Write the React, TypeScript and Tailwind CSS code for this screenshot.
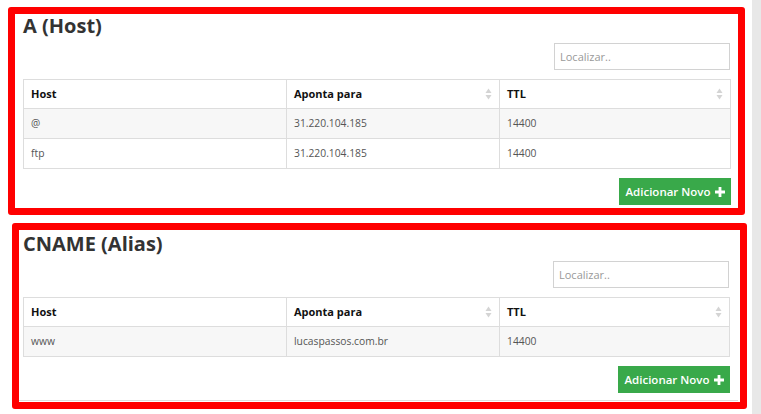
import React from 'react';

interface DnsRow {
  host: string;
  target: string;
  ttl: string;
}

const aRecords: DnsRow[] = [
  { host: '@', target: '31.220.104.185', ttl: '14400' },
  { host: 'ftp', target: '31.220.104.185', ttl: '14400' },
];

const cnameRecords: DnsRow[] = [{ host: 'www', target: 'lucaspassos.com.br', ttl: '14400' }];

function SortIcon() {
  return (
    <svg className="h-[12px] w-[7px]" viewBox="0 0 7 12" aria-hidden="true">
      <path d="M3.5 0.5 L6.5 5 L0.5 5 Z" fill="#d4d4d4" />
      <path d="M3.5 11.5 L6.5 7 L0.5 7 Z" fill="#d4d4d4" />
    </svg>
  );
}

function PlusIcon() {
  return (
    <svg className="h-[10px] w-[10px]" viewBox="0 0 10 10" aria-hidden="true">
      <path d="M3.6 0h2.8v3.6H10v2.8H6.4V10H3.6V6.4H0V3.6h3.6z" fill="#fff" />
    </svg>
  );
}

/**
 * Bloco de registros DNS
 * - titulo, busca, tabela e botao de adicionar
 */
function RecordTable({ title, rows }: { title: string; rows: DnsRow[] }) {
  return (
    <div className="flex flex-col">
      <h2 className="text-[20px] font-bold leading-[22px] text-[#333]">{title}</h2>

      {/* busca */}
      <div className="mt-[6px] flex justify-end pr-[1px]">
        <input
          placeholder="Localizar.."
          className="h-[27px] w-[176px] border border-[#d2d2d2] px-[5px] text-[11px] text-[#555] outline-none placeholder:text-[#999]"
        />
      </div>

      {/* tabela */}
      <table className="mt-[9px] w-full table-fixed border-collapse border border-[#ddd] text-left">
        <colgroup>
          <col className="w-[263px]" />
          <col className="w-[213px]" />
          <col />
        </colgroup>
        <thead>
          <tr className="h-[29px]">
            <th className="border border-[#ddd] px-[7px] text-[11px] font-bold text-[#111]">Host</th>
            <th className="border border-[#ddd] px-[7px] text-[11px] font-bold text-[#111]">
              <div className="flex items-center justify-between">
                <span>Aponta para</span>
                <SortIcon />
              </div>
            </th>
            <th className="border border-[#ddd] px-[7px] text-[11px] font-bold text-[#111]">
              <div className="flex items-center justify-between">
                <span>TTL</span>
                <SortIcon />
              </div>
            </th>
          </tr>
        </thead>
        <tbody>
          {rows.map((r, i) => (
            <tr key={r.host} className={`h-[30px] ${i % 2 === 0 ? 'bg-[#f7f7f7]' : 'bg-white'}`}>
              <td className="border border-[#ddd] px-[7px] text-[10.3px] text-[#555]">{r.host}</td>
              <td className="border border-[#ddd] px-[7px] text-[10.3px] text-[#555]">{r.target}</td>
              <td className="border border-[#ddd] px-[7px] text-[10.3px] text-[#555]">{r.ttl}</td>
            </tr>
          ))}
        </tbody>
      </table>

      {/* adicionar */}
      <div className="mt-[9px] flex justify-end">
        <button className="flex h-[27px] w-[112px] items-center justify-center gap-[4px] bg-[#39a94a] text-[11.5px] font-semibold text-white">
          <span>Adicionar Novo</span>
          <PlusIcon />
        </button>
      </div>
    </div>
  );
}

export default function App() {
  return (
    <div className="flex min-h-[414px] bg-white font-['Open_Sans',sans-serif]">
      <div className="w-[752px] pt-[7px]">
        <section className="ml-[8px] h-[208px] w-[737px] rounded-[3px] border-[7px] border-[#ff0000] pl-[8px] pr-[7px] pt-[1px]">
          <RecordTable title="A (Host)" rows={aRecords} />
        </section>

        <section className="ml-[12px] mt-[8px] h-[186px] w-[735px] rounded-[3px] border-[7px] border-[#ff0000]">
          <div className="pl-[4px] pr-[10px] pt-[3px]">
            <RecordTable title="CNAME (Alias)" rows={cnameRecords} />
          </div>
          <div className="mr-[2px] mt-[7px] h-px bg-[#ddd]" />
        </section>
      </div>
      <div className="flex-1 bg-[#e8e8e8]" />
    </div>
  );
}
